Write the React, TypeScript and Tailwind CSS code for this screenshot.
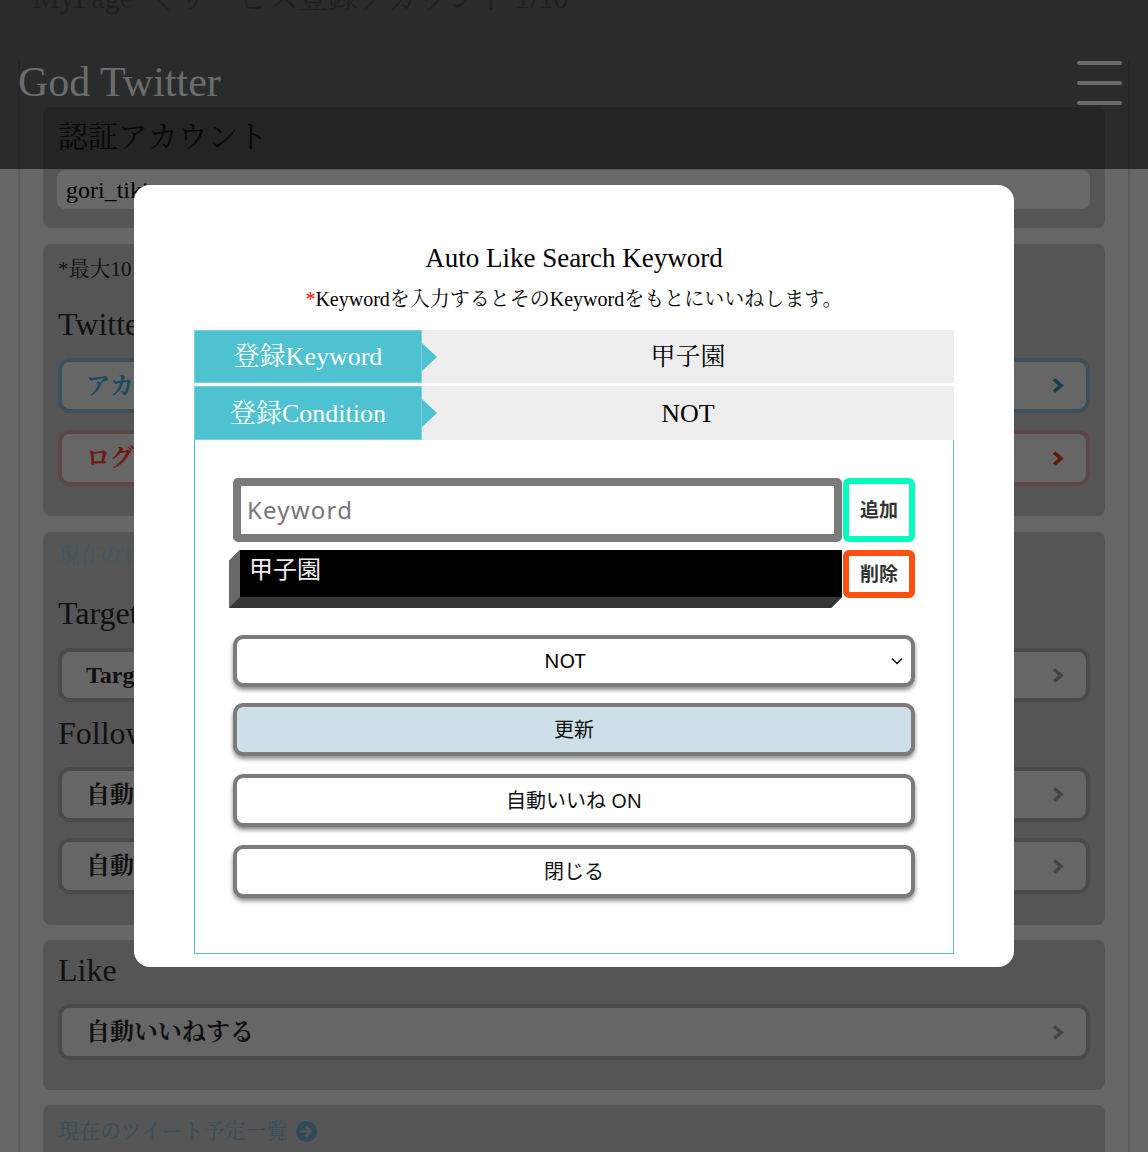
import React from "react";

const SERIF = "font-['Liberation_Serif','Noto_Serif_CJK_JP','Noto_Sans_CJK_JP',serif]";
const SANS = "font-['Noto_Sans','Noto_Sans_CJK_JP',sans-serif]";

function Chev({ c }: { c: string }) {
  return (
    <svg width="12" height="17" viewBox="0 0 12 17">
      <path d="M2 2.5 L9 8.5 L2 14.5" fill="none" stroke={c} strokeWidth="3.6" />
    </svg>
  );
}

function BgButton({
  label,
  border,
  text,
  chev,
  h,
  mt,
}: {
  label: string;
  border: string;
  text: string;
  chev: string;
  h: string;
  mt: string;
}) {
  return (
    <div
      className={`mx-[15px] ${mt} ${h} ${border} border-[4px] bg-[#666] rounded-[12px] flex items-center justify-between pl-[24px] pr-[22px]`}
    >
      <span className={`${SERIF} ${text} text-[24px] font-bold`}>{label}</span>
      <Chev c={chev} />
    </div>
  );
}

export default function App() {
  return (
    <div className="relative w-full h-[1152px] overflow-hidden bg-[#666]">
      {/* page content */}
      <div className={`${SERIF} mt-[-20px] pl-[33px] text-[30px] leading-[36px] text-[#4c4c4c] whitespace-nowrap`}>
        MyPage ＼ サービス登録アカウント 1/10
      </div>
      <div className="mx-[18px] mt-[44px] border-x-[2px] border-[#5a5a5a] px-[23px] pt-[47px] h-[1200px]">
        {/* card 1 */}
        <div className="bg-[#555] rounded-[8px] pt-[10px] pb-[19px]">
          <div className={`${SERIF} pl-[15px] text-[30px] leading-[40px] text-[#111]`}>認証アカウント</div>
          <div className={`${SERIF} mt-[13px] ml-[14px] mr-[15px] h-[39px] bg-[#686868] rounded-[8px] pl-[9px] flex items-center text-[24px] text-black`}>
            gori_tiki
          </div>
        </div>
        {/* card 2 */}
        <div className="mt-[16px] bg-[#555] rounded-[8px] pt-[10px] pb-[30px]">
          <div className={`${SERIF} pl-[15px] text-[21px] leading-[30px] text-[#111]`}>*最大10 アカウントまで登録できます。</div>
          <div className={`${SERIF} mt-[20px] pl-[15px] text-[32px] leading-[40px] text-[#111]`}>Twitter アカウント</div>
          <BgButton label="アカウント追加" border="border-[#3d5059]" text="text-[#1d4a5f]" chev="#163d4e" h="h-[55px]" mt="mt-[14px]" />
          <BgButton label="ログアウト" border="border-[#5c4646]" text="text-[#6e1b10]" chev="#5e1a10" h="h-[56px]" mt="mt-[17px]" />
        </div>
        {/* card 3 */}
        <div className="mt-[16px] bg-[#555] rounded-[8px] pt-[8px] pb-[31px]">
          <div className={`${SERIF} pl-[15px] text-[21px] leading-[30px] text-[#3d5866]`}>現在のTargetアカウント一覧</div>
          <div className={`${SERIF} mt-[23px] pl-[15px] text-[32px] leading-[40px] text-[#111]`}>Target</div>
          <BgButton label="Target登録" border="border-[#4a4a4a]" text="text-[#111]" chev="#444" h="h-[54px]" mt="mt-[15px]" />
          <div className={`${SERIF} mt-[11px] pl-[15px] text-[32px] leading-[40px] text-[#111]`}>Follow</div>
          <BgButton label="自動フォローする" border="border-[#4a4a4a]" text="text-[#111]" chev="#444" h="h-[55px]" mt="mt-[14px]" />
          <BgButton label="自動アンフォローする" border="border-[#4a4a4a]" text="text-[#111]" chev="#444" h="h-[56px]" mt="mt-[16px]" />
        </div>
        {/* card 4 */}
        <div className="mt-[15px] bg-[#555] rounded-[8px] pt-[10px] pb-[30px]">
          <div className={`${SERIF} pl-[15px] text-[32px] leading-[40px] text-[#111]`}>Like</div>
          <BgButton label="自動いいねする" border="border-[#4a4a4a]" text="text-[#111]" chev="#444" h="h-[56px]" mt="mt-[14px]" />
        </div>
        {/* card 5 */}
        <div className="mt-[15px] bg-[#555] rounded-[8px] pt-[11px] pb-[40px]">
          <div className={`${SERIF} pl-[15px] text-[21px] leading-[30px] text-[#33505e] flex items-center gap-[8px]`}>
            現在のツイート予定一覧
            <svg width="21" height="21" viewBox="0 0 20 20">
              <circle cx="10" cy="10" r="10" fill="#2f4b59" />
              <path d="M5 10 H13 M10 6 L14 10 L10 14" fill="none" stroke="#555" strokeWidth="2.6" strokeLinecap="round" strokeLinejoin="round" />
            </svg>
          </div>
        </div>
      </div>

      {/* fixed header (translucent) */}
      <div className="absolute top-0 left-0 right-0 h-[169px] bg-[rgba(0,3,3,0.59)] z-10">
        <div className={`${SERIF} absolute left-[18px] top-[58px] text-[42px] leading-[48px] text-[#6c6c6c]`}>God Twitter</div>
        <div className="absolute left-[1077px] top-[61px] w-[45px] flex flex-col gap-[16px]">
          <div className="h-[4px] rounded-full bg-[#6a6a6a]" />
          <div className="h-[4px] rounded-full bg-[#6a6a6a]" />
          <div className="h-[4px] rounded-full bg-[#6a6a6a]" />
        </div>
      </div>

      {/* modal */}
      <div className="absolute inset-0 z-20 flex justify-center pt-[185px]">
        <div className="w-[880px] h-[782px] bg-white rounded-[16px] px-[60px] pt-[55px]">
          <div className={`${SERIF} text-center text-[27px] leading-[36px] text-black`}>Auto Like Search Keyword</div>
          <div className={`${SERIF} mt-[9px] text-center text-[20px] leading-[28px] text-black`}>
            <span className="text-[#f00]">*</span>Keywordを入力するとそのKeywordをもとにいいねします。
          </div>

          {/* table */}
          <div className="mt-[17px] flex flex-col gap-[3px]">
            <div className="flex h-[53px]">
              <div className="relative w-[228px] bg-[#4ec2d0] border border-[#7fd2dc] flex items-center justify-center">
                <span className={`${SERIF} text-[26px] text-white`}>登録Keyword</span>
                <span className="absolute right-[-16px] top-1/2 -translate-y-1/2 w-0 h-0 border-y-[14px] border-y-transparent border-l-[15px] border-l-[#4ec2d0]" />
              </div>
              <div className={`${SERIF} flex-1 bg-[#ededed] flex items-center justify-center text-[25px] text-black`}>甲子園</div>
            </div>
            <div className="flex h-[54px]">
              <div className="relative w-[228px] bg-[#4ec2d0] border border-[#7fd2dc] flex items-center justify-center">
                <span className={`${SERIF} text-[26px] text-white`}>登録Condition</span>
                <span className="absolute right-[-16px] top-1/2 -translate-y-1/2 w-0 h-0 border-y-[14px] border-y-transparent border-l-[15px] border-l-[#4ec2d0]" />
              </div>
              <div className={`${SERIF} flex-1 bg-[#ededed] flex items-center justify-center text-[26px] text-black`}>NOT</div>
            </div>
          </div>

          {/* box */}
          <div className={`${SANS} border-x border-b border-[#4ec2d0] px-[38px] pt-[38px] pb-[55px]`}>
            <div className="flex h-[64px] gap-[1px]">
              <input
                placeholder="Keyword"
                className="flex-1 min-w-0 border-[8px] border-[#7b7b7b] rounded-[5px] pl-[6px] text-[24px] tracking-[1.2px] placeholder:text-[#777] outline-none"
              />
              <div className="w-[72px] border-[6px] border-[#00ffbf] rounded-[6px] flex items-center justify-center text-[19px] font-bold text-[#333]">
                追加
              </div>
            </div>
            <div className="mt-[8px] flex gap-[1px] items-start">
              <div className="ml-[-4px] flex-1 h-[58px] bg-black border-l-[11px] border-l-[#686868] border-b-[11px] border-b-[#353535] [clip-path:polygon(0_11px,11px_0,100%_0,100%_calc(100%_-_11px),calc(100%_-_11px)_100%,0_100%)] pl-[9px] pt-[7px] text-[24px] leading-[24px] text-[#eee]">
                甲子園
              </div>
              <div className="w-[72px] h-[48px] border-[6px] border-[#ff5010] rounded-[6px] flex items-center justify-center text-[19px] font-bold text-[#333]">
                削除
              </div>
            </div>

            <div className="mt-[27px] h-[52px] border-[4px] border-[#7b7b7b] rounded-[10px] bg-white shadow-[0_3px_4px_rgba(0,0,0,0.45)] flex items-center relative">
              <span className="flex-1 text-center pr-[18px] text-[20px] text-black">NOT</span>
              <svg className="absolute right-[8px] top-1/2 -translate-y-1/2" width="12" height="8" viewBox="0 0 12 8">
                <path d="M1 1.5 L6 6.5 L11 1.5" fill="none" stroke="#111" strokeWidth="1.5" />
              </svg>
            </div>
            <div className="mt-[16px] h-[53px] border-[4px] border-[#7b7b7b] rounded-[10px] bg-[#cfdfe9] shadow-[0_3px_4px_rgba(0,0,0,0.45)] flex items-center justify-center text-[20px] text-[#111]">
              更新
            </div>
            <div className="mt-[18px] h-[53px] border-[4px] border-[#7b7b7b] rounded-[10px] bg-white shadow-[0_3px_4px_rgba(0,0,0,0.45)] flex items-center justify-center text-[20px] text-[#111]">
              自動いいね ON
            </div>
            <div className="mt-[18px] h-[53px] border-[4px] border-[#7b7b7b] rounded-[10px] bg-white shadow-[0_3px_4px_rgba(0,0,0,0.45)] flex items-center justify-center text-[20px] text-[#111]">
              閉じる
            </div>
          </div>
        </div>
      </div>
    </div>
  );
}
